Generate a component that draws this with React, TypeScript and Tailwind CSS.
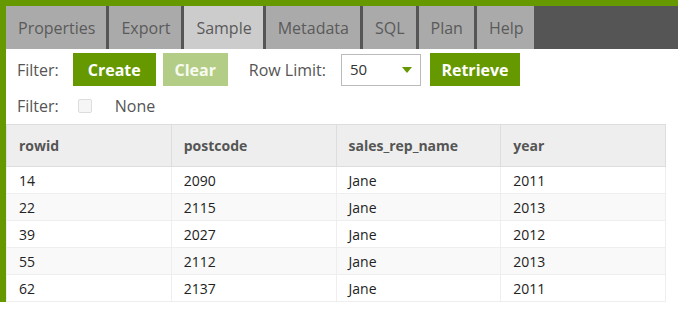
import React from "react";

const TABS = ["Properties", "Export", "Sample", "Metadata", "SQL", "Plan", "Help"];
const COLUMNS = ["rowid", "postcode", "sales_rep_name", "year"];
const ROWS = [
  ["14", "2090", "Jane", "2011"],
  ["22", "2115", "Jane", "2013"],
  ["39", "2027", "Jane", "2012"],
  ["55", "2112", "Jane", "2013"],
  ["62", "2137", "Jane", "2011"],
];

export default function App() {
  return (
    <div className="w-[678px] bg-white font-['Open_Sans',sans-serif]">
      <div className="border-t-[6px] border-l-[6px] border-[#669900]">
        {/* Tabs */}
        <div className="flex h-[43px] gap-[3px] bg-[#555555]">
          {TABS.map((t) => (
            <div
              key={t}
              className={`flex items-center pl-[12px] pr-[11px] text-[16px] text-[#5a5a5a] ${
                t === "Sample" ? "bg-[#cccccc]" : "bg-[#aaaaaa]"
              }`}
            >
              {t}
            </div>
          ))}
        </div>

        {/* Controls */}
        <div className="flex h-[33px] items-center mt-[4px] pl-[11px] text-[16px] text-[#555]">
          <span>Filter:</span>
          <button className="ml-[14px] h-[33px] w-[83px] bg-[#669900] text-white font-bold">Create</button>
          <button className="ml-[7px] h-[33px] w-[65px] bg-[#b3cd86] text-[#f7faf0] font-bold">Clear</button>
          <span className="ml-[21px]">Row Limit:</span>
          <div className="ml-[15px] flex h-[32px] w-[80px] items-center justify-between border border-[#bbbbbb] pl-[8px] pr-[8px] text-[15px] text-[#333]">
            <span>50</span>
            <svg width="10" height="6" viewBox="0 0 10 6">
              <path d="M0 0 L10 0 L5 6 Z" fill="#669900" />
            </svg>
          </div>
          <button className="ml-[9px] h-[33px] w-[90px] bg-[#669900] text-white font-bold">Retrieve</button>
        </div>

        <div className="flex h-[26px] items-center mt-[7px] pl-[11px] text-[16px] text-[#555]">
          <span>Filter:</span>
          <span className="ml-[19px] h-[14px] w-[14px] rounded-[2px] border border-[#dddddd] bg-[#f6f6f6]" />
          <span className="ml-[23px]">None</span>
        </div>

        {/* Table */}
        <table className="mt-[5px] w-[660px] border-collapse text-[14px] table-fixed">
          <thead>
            <tr className="h-[42px] bg-[#eeeeee]">
              {COLUMNS.map((c) => (
                <th
                  key={c}
                  className="border border-[#dddddd] px-[12px] text-left font-bold text-[#555]"
                >
                  {c}
                </th>
              ))}
            </tr>
          </thead>
          <tbody>
            {ROWS.map((r, i) => (
              <tr key={i} className={`h-[27px] ${i % 2 === 1 ? "bg-[#f9f9f9]" : "bg-white"}`}>
                {r.map((v, j) => (
                  <td key={j} className="border border-[#eeeeee] px-[12px] text-[#222]">
                    {v}
                  </td>
                ))}
              </tr>
            ))}
          </tbody>
        </table>
      </div>
    </div>
  );
}
